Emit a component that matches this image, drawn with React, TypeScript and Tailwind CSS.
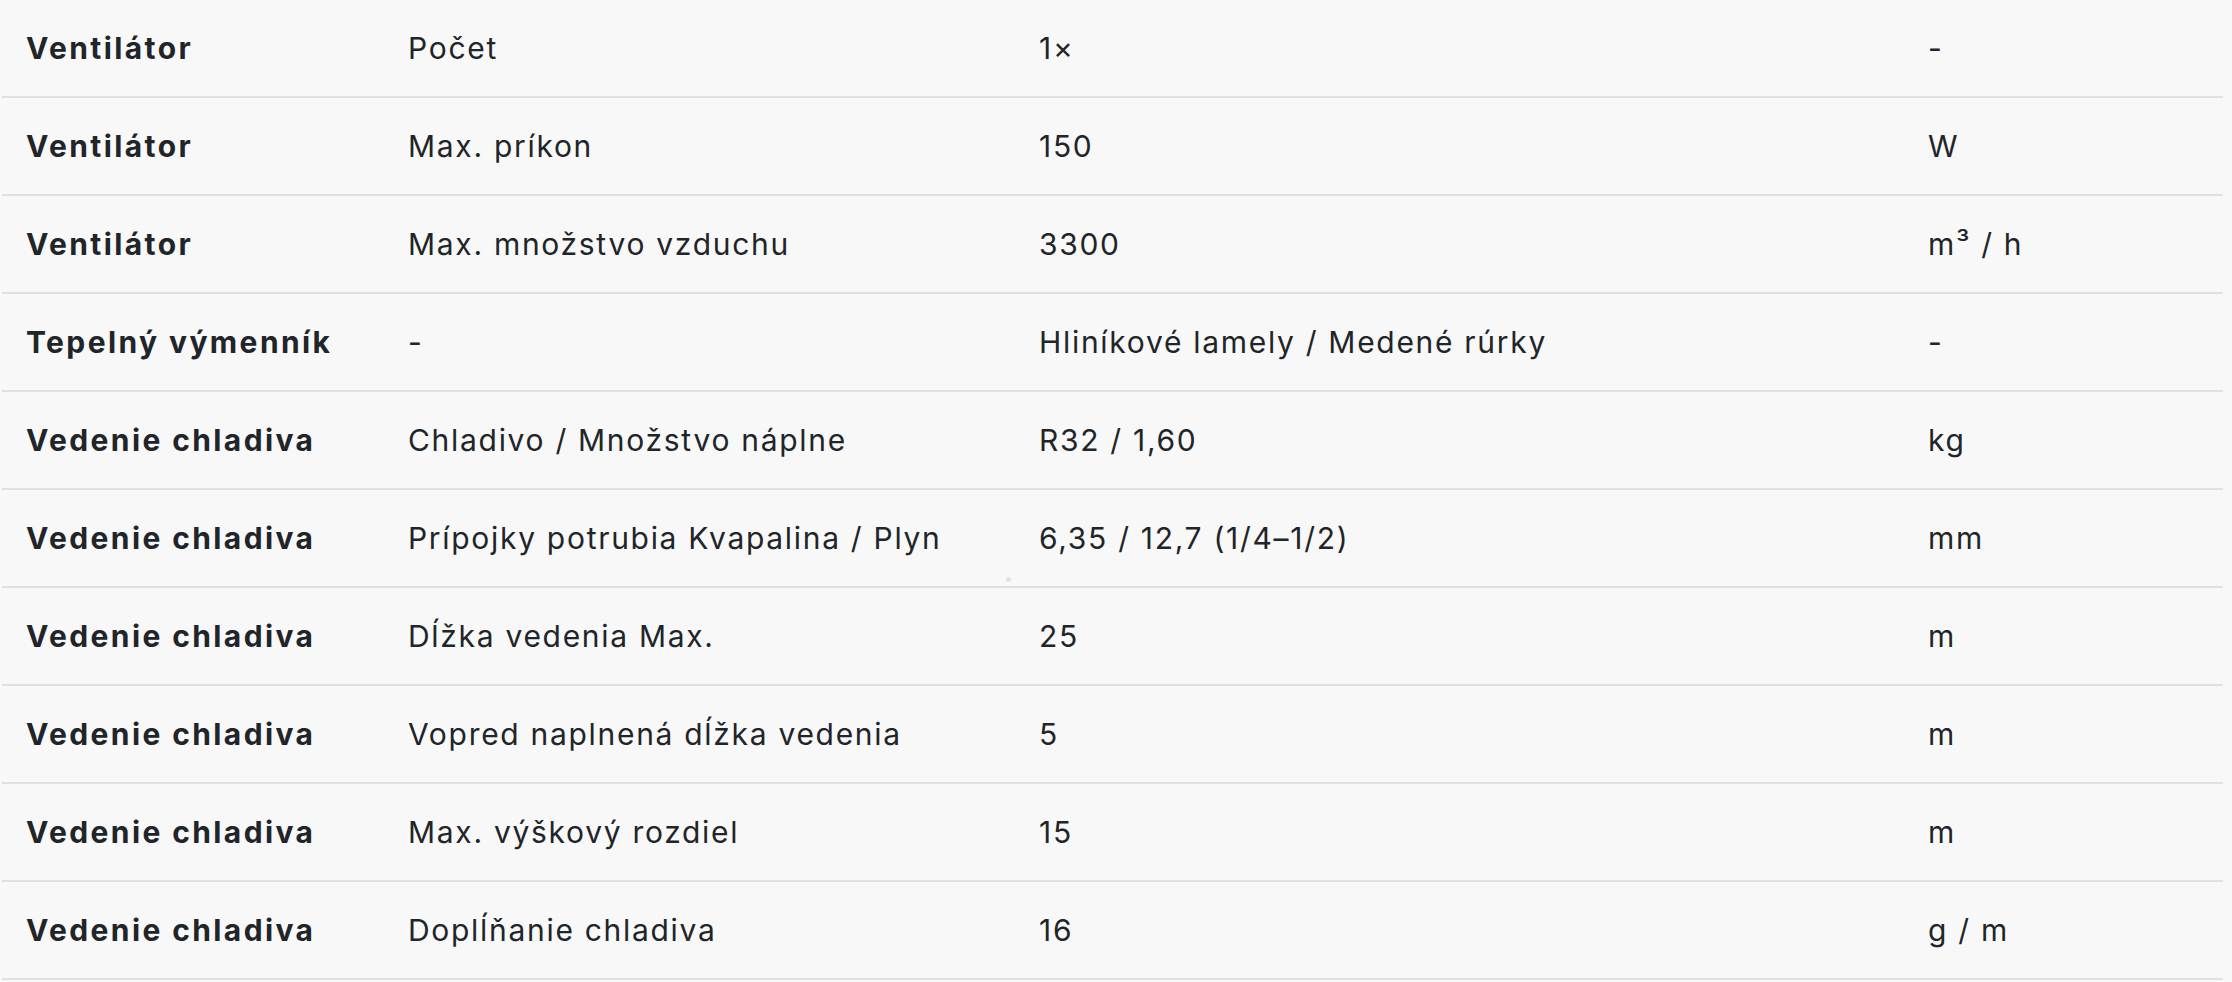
const rows: [string, string, string, string][] = [
  ["Ventilátor", "Počet", "1×", "-"],
  ["Ventilátor", "Max. príkon", "150", "W"],
  ["Ventilátor", "Max. množstvo vzduchu", "3300", "m³ / h"],
  ["Tepelný výmenník", "-", "Hliníkové lamely / Medené rúrky", "-"],
  ["Vedenie chladiva", "Chladivo / Množstvo náplne", "R32 / 1,60", "kg"],
  ["Vedenie chladiva", "Prípojky potrubia Kvapalina / Plyn", "6,35 / 12,7 (1/4–1/2)", "mm"],
  ["Vedenie chladiva", "Dĺžka vedenia Max.", "25", "m"],
  ["Vedenie chladiva", "Vopred naplnená dĺžka vedenia", "5", "m"],
  ["Vedenie chladiva", "Max. výškový rozdiel", "15", "m"],
  ["Vedenie chladiva", "Doplĺňanie chladiva", "16", "g / m"],
];

export default function App() {
  return (
    <div className="relative min-h-[982px] w-full bg-[#f8f8f8] pl-[2px] font-['Inter',sans-serif] text-[30px] tracking-[1.7px] text-[#212529]">
      <div className="w-[2221px]">
        {rows.map(([group, name, value, unit], i) => (
          <div
            key={i}
            className="grid h-[98px] grid-cols-[382px_631px_889px_319px] items-center border-b-2 border-[#dee2e6]"
          >
            <div className="pl-6 font-bold tracking-[2.4px]">{group}</div>
            <div className="pl-6">{name}</div>
            <div className="pl-6">{value}</div>
            <div className="pl-6">{unit}</div>
          </div>
        ))}
      </div>
      <span className="absolute left-[1006px] top-[577px] h-[5px] w-[5px] rounded-full bg-[#e2e2e2]" />
    </div>
  );
}
